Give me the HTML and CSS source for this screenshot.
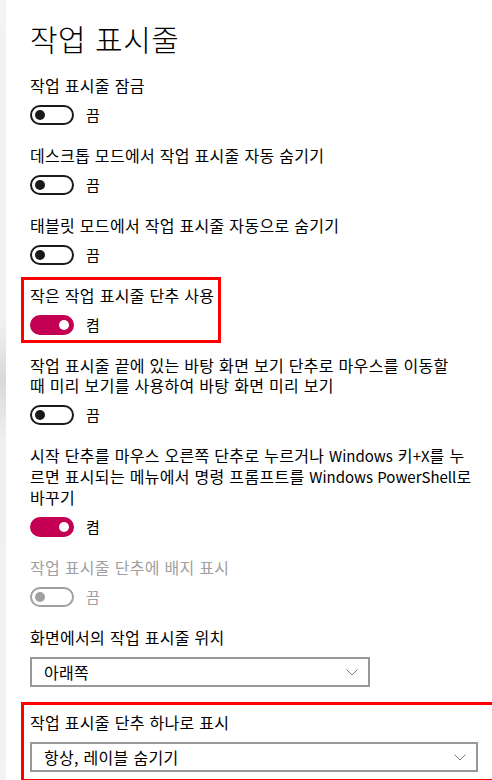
FILE: index.html
```html
<!DOCTYPE html>
<html lang="ko">
<head>
    <meta charset="UTF-8">
    <title>작업 표시줄</title>
    <link rel="stylesheet" href="styles.css">
</head>
<body>
    <div class="strip"></div>
    <main class="page">
        <h1 class="title">작업 표시줄</h1>

        <div class="setting">
            <div class="label">작업 표시줄 잠금</div>
            <div class="switch-row"><span class="switch"></span><span>끔</span></div>
        </div>

        <div class="setting">
            <div class="label">데스크톱 모드에서 작업 표시줄 자동 숨기기</div>
            <div class="switch-row"><span class="switch"></span><span>끔</span></div>
        </div>

        <div class="setting">
            <div class="label">태블릿 모드에서 작업 표시줄 자동으로 숨기기</div>
            <div class="switch-row"><span class="switch"></span><span>끔</span></div>
        </div>

        <!-- highlighted -->
        <div class="setting mark mark-small">
            <div class="label">작은 작업 표시줄 단추 사용</div>
            <div class="switch-row"><span class="switch on"></span><span>켬</span></div>
        </div>

        <div class="setting">
            <div class="label">작업 표시줄 끝에 있는 바탕 화면 보기 단추로 마우스를 이동할<br>때 미리 보기를 사용하여 바탕 화면 미리 보기</div>
            <div class="switch-row"><span class="switch"></span><span>끔</span></div>
        </div>

        <div class="setting">
            <div class="label">시작 단추를 마우스 오른쪽 단추로 누르거나 <span class="en">Windows</span> 키<span class="en">+X</span>를 누<br>르면 표시되는 메뉴에서 명령 프롬프트를 <span class="en">Windows PowerShell</span>로<br>바꾸기</div>
            <div class="switch-row"><span class="switch on"></span><span>켬</span></div>
        </div>

        <div class="setting disabled">
            <div class="label">작업 표시줄 단추에 배지 표시</div>
            <div class="switch-row"><span class="switch"></span><span>끔</span></div>
        </div>

        <div class="setting">
            <div class="label">화면에서의 작업 표시줄 위치</div>
            <div class="select select-short">
                <span>아래쪽</span>
                <svg class="chevron" width="12" height="7" viewBox="0 0 12 7"><path d="M0.5 0.5 L6 6 L11.5 0.5" fill="none" stroke="#777" stroke-width="1"/></svg>
            </div>
        </div>

        <div class="setting mark mark-wide last">
            <div class="label">작업 표시줄 단추 하나로 표시</div>
            <div class="select select-long">
                <span>항상, 레이블 숨기기</span>
                <svg class="chevron" width="12" height="7" viewBox="0 0 12 7"><path d="M0.5 0.5 L6 6 L11.5 0.5" fill="none" stroke="#777" stroke-width="1"/></svg>
            </div>
        </div>
    </main>
</body>
</html>
```

FILE: styles.css
```css
body {
    margin: 0;
    background: #fff;
    color: #000;
    font-family: "Noto Sans CJK KR", "Noto Sans", sans-serif;
    font-size: 16px;
    letter-spacing: 0.3px;
    line-height: 20px;
    display: flex;
    min-height: 780px;
    overflow: hidden;
}
.strip {
    width: 6px;
    flex: none;
    background: linear-gradient(#f3f3f3 0, #f1f1f1 320px, #d6d9dc 380px, #eef0f1 440px, #f3f3f3 100%);
}
.page { padding: 18px 0 0 24px; flex: 1; }
.title {
    margin: 0 0 17px 0;
    font-size: 30px;
    font-weight: 300;
    letter-spacing: 0.5px;
    line-height: 40px;
}
.setting { margin-bottom: 20px; position: relative; }
.setting.last { margin-top: 25px; }
.label { margin-bottom: 10px; }
.en { font-size: 15px; letter-spacing: 0; }
.switch-row { display: flex; align-items: center; gap: 12px; height: 20px; font-size: 15px; }
.switch {
    width: 44px;
    height: 20px;
    box-sizing: border-box;
    border: 2px solid #1a1a1a;
    border-radius: 10px;
    position: relative;
}
.switch::after {
    content: '';
    position: absolute;
    left: 3px;
    top: 3px;
    width: 10px;
    height: 10px;
    border-radius: 50%;
    background: #1a1a1a;
}
.switch.on { background: #c30052; border-color: #c30052; }
.switch.on::after { left: auto; right: 3px; background: #fff; }
.disabled { color: #a0a0a0; }
.disabled .switch { border-color: #a0a0a0; }
.disabled .switch::after { background: #a0a0a0; }

.select {
    height: 30px;
    box-sizing: border-box;
    border: 2px solid #999;
    display: flex;
    align-items: center;
    justify-content: space-between;
    padding: 0 10px 0 12px;
}
.select-short { width: 340px; }
.select-long { width: 448px; }

/* red annotation boxes */
.mark::after {
    content: '';
    position: absolute;
    left: -9px;
    border: 3px solid #f00;
}
.mark-small::after { top: -8px; bottom: -8px; width: 194px; }
.mark-wide::after { top: -10px; right: -23px; bottom: -10px; }
```
